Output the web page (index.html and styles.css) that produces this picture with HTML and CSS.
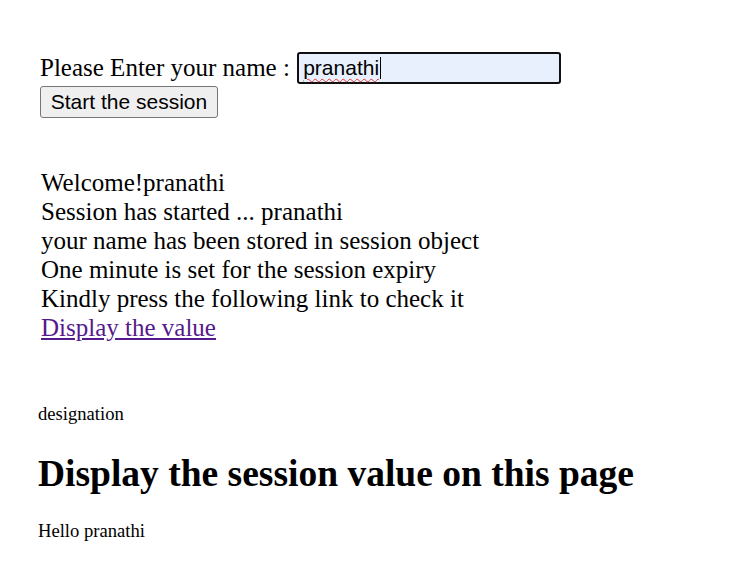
FILE: index.html
```html
<!DOCTYPE html>
<html>
<head>
<meta charset="utf-8">
<link rel="stylesheet" href="styles.css">
</head>
<body>
<div class="page">
  <form class="form">
    <div class="row">
      <label class="label">Please Enter your name : </label><span class="input">pranathi<span class="caret"></span></span>
    </div>
    <button type="button" class="btn">Start the session</button>
  </form>
  <div class="msgs">
    <div>Welcome!pranathi</div>
    <div>Session has started ... pranathi</div>
    <div>your name has been stored in session object</div>
    <div>One minute is set for the session expiry</div>
    <div>Kindly press the following link to check it</div>
    <a class="link" href="#">Display the value</a>
  </div>
  <div class="second">
    <p class="small">designation</p>
    <h1 class="title">Display the session value on this page</h1>
    <p class="small">Hello pranathi</p>
  </div>
</div>
</body>
</html>
```
FILE: styles.css
```css
html, body { margin: 0; padding: 0; background: #fff; }
body { font-family: "Liberation Serif", "Times New Roman", serif; color: #000; }
.page { padding: 52px 0 0 0; }
.form { margin-left: 40px; display: flex; flex-direction: column; align-items: flex-start; }
.row { display: flex; align-items: center; font-size: 25px; height: 32px; }
.label { margin-right: 1px; white-space: pre; }
.input {
  box-sizing: border-box; width: 264px; height: 32px;
  border: 2px solid #101010; border-radius: 3px; background: #e8f0fe;
  font-family: "Liberation Sans", Arial, sans-serif; font-size: 21px;
  padding: 0 0 0 4px; display: flex; align-items: center;
  text-decoration: underline wavy #e53935; text-decoration-thickness: 1px; text-underline-offset: 3px;
}
.caret { display: inline-block; width: 1px; height: 22px; background: #000; margin-left: 1px; }
.btn {
  margin-top: 2px; box-sizing: border-box; height: 32px; width: 178px;
  font-family: "Liberation Sans", Arial, sans-serif; font-size: 21px; color: #000;
  background: #efefef; border: 1px solid #767676; border-radius: 3px; padding: 0;
}
.msgs { margin: 50px 0 0 41px; font-size: 25px; line-height: 29px; }
.link { color: #551a8b; text-decoration: underline; }
.second { margin: 61px 0 0 38px; }
.small { font-size: 18.6px; margin: 0; }
.title { font-size: 37.5px; font-weight: bold; margin: 27px 0 25px; }
```
